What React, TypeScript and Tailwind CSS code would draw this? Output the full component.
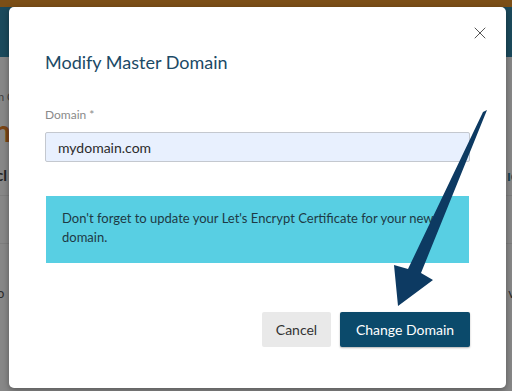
import React from "react";
import { X } from "lucide-react";

const font = { fontFamily: "Lato, 'Noto Sans', sans-serif" };

const Backdrop = () => (
  <div className="flex flex-col w-full h-full bg-[#878787]">
    <div className="h-[7px] bg-[#7c4f17]" />
    <div className="h-[50px] bg-[#1b4a5c]" />
    <div className="flex justify-between items-center h-[24px] mt-[28px] text-[11px] text-[#3f3f3f]">
      <span className="-ml-[2px]">n C</span>
      <span />
    </div>
    <div className="h-[34px] mt-[4px] text-[30px] leading-[34px] font-bold text-[#7a4414] -ml-[6px]">n</div>
    <div className="flex justify-between items-center h-[40px] mt-[8px] text-[15px] font-bold text-[#222]">
      <span className="-ml-[4px]">cl</span>
      <span className="text-[#174150] -mr-[6px]">ıc</span>
    </div>
    <div className="h-[48px] border-t border-[#7d7d7d]" />
    <div className="h-[60px] border-t border-[#7d7d7d] flex justify-between items-end text-[13px] text-[#2c2c2c]">
      <span className="-ml-[3px]">o</span>
      <span className="-mr-[3px]">v</span>
    </div>
  </div>
);

const Arrow = () => (
  <svg className="absolute inset-0 pointer-events-none" width="512" height="391" viewBox="0 0 512 391">
    <polygon
      points="487,110 421,273 433,280 398,306 394,265 408,269 483,112"
      fill="#0d3a62"
    />
  </svg>
);

export default function App() {
  return (
    <div className="relative w-[512px] h-[391px] overflow-hidden" style={font}>
      <Backdrop />
      <div className="absolute left-[9px] top-[7px] w-[497px] h-[381px] bg-white rounded-[5px] shadow-[0_2px_6px_rgba(0,0,0,0.35)] flex flex-col pt-[50px] px-[36px]">
        <button className="absolute top-[16px] right-[16px] text-[#555]">
          <X size={20} strokeWidth={1.2} />
        </button>
        <h2 className="text-[18px] leading-[24px] text-[#1b4a66] -mt-[7px]">Modify Master Domain</h2>
        <label className="mt-[33px] text-[12px] leading-[16px] text-[#8a8a8a]">Domain *</label>
        <div className="mt-[9px] h-[30px] bg-[#e8f0fe] border-[1.5px] border-[#c4c8cf] rounded-[2px] flex items-center pl-[12px] text-[14px] text-[#2b2b2b]">
          mydomain.com
        </div>
        <div className="mt-[34px] mx-[1px] h-[67px] bg-[#58cfe3] pl-[16px] pr-[16px] pt-[13px] text-[13px] leading-[19px] text-[#1e3a45]">
          Don't forget to update your Let's Encrypt Certificate for your new domain.
        </div>
        <div className="mt-[49px] flex justify-end gap-[9px]">
          <button className="h-[35px] w-[69px] bg-[#e9e9e9] rounded-[2px] text-[14px] text-[#333]">Cancel</button>
          <button className="h-[35px] w-[130px] bg-[#0b4a6b] rounded-[2px] text-[14px] text-white shadow-[0_1px_2px_rgba(0,0,0,0.3)]">
            Change Domain
          </button>
        </div>
      </div>
      <Arrow />
    </div>
  );
}
